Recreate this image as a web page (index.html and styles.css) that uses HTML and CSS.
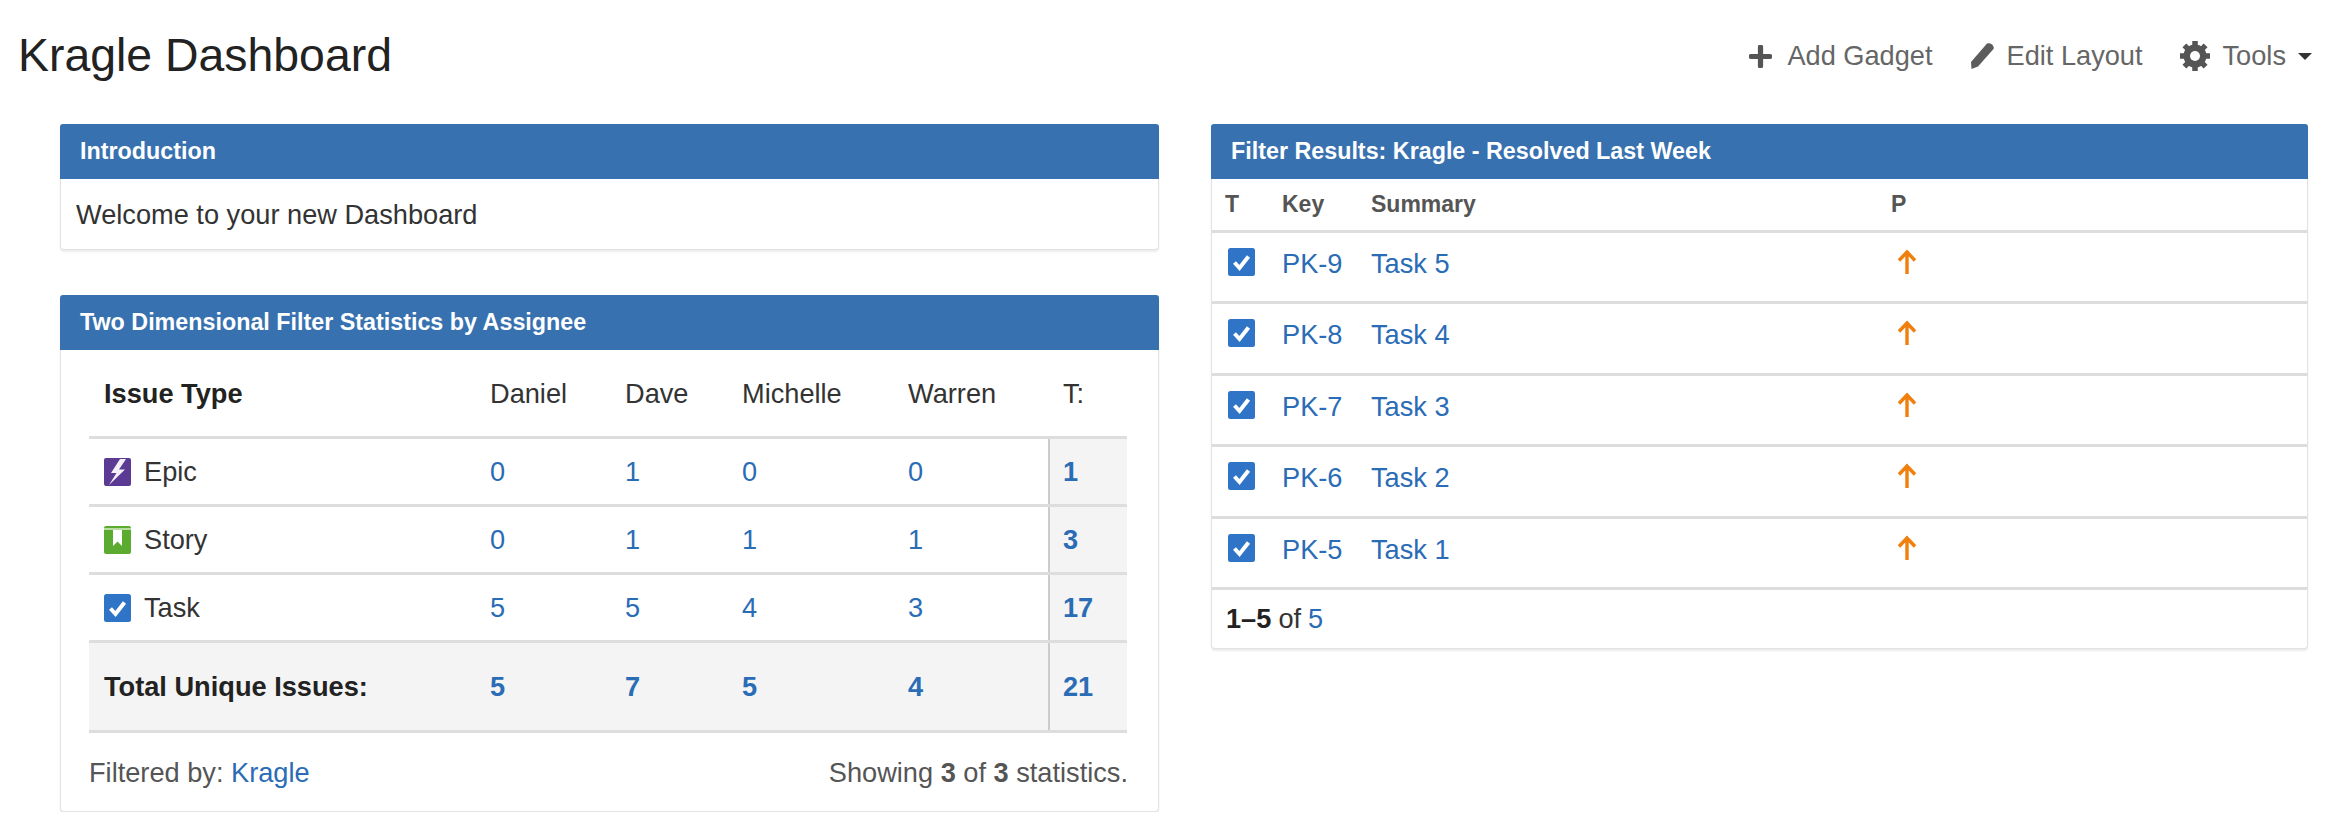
FILE: index.html
```html
<!DOCTYPE html>
<html lang="en">
<head>
<meta charset="utf-8">
<title>Kragle Dashboard</title>
<link rel="stylesheet" href="styles.css">
</head>
<body>
<svg class="defs" width="0" height="0" aria-hidden="true">
  <symbol id="task" viewBox="0 0 27 28">
    <rect x="0" y="0" width="27" height="28" rx="2.5" fill="#2f74c6"/>
    <path d="M6.5 14.5 L11.5 20 L20.5 8.5" fill="none" stroke="#fff" stroke-width="4"/>
  </symbol>
  <symbol id="arrow" viewBox="0 0 20 26">
    <path d="M10 25 V3 M2 11.5 L10 3 L18 11.5" fill="none" stroke="#f07f0c" stroke-width="3.4"/>
  </symbol>
</svg>
<header class="top">
  <h1 class="title">Kragle Dashboard</h1>
  <nav class="tools">
    <a class="tool tool-add">
      <svg class="ic-plus" viewBox="0 0 22 22"><path d="M11 2 V20 M2 11 H20" stroke="#555" stroke-width="5" stroke-linecap="round"/></svg>
      <span>Add Gadget</span>
    </a>
    <a class="tool">
      <svg class="ic-pencil" viewBox="0 0 26 28"><path d="M18 1.5 Q20.5 .5 23 2.500 Q25.500 5 24.500 7 L9 24.500 L2.500 27 L2 20 Z" fill="#5c5c5c"/></svg>
      <span>Edit Layout</span>
    </a>
    <a class="tool">
      <svg class="ic-gear" viewBox="0 0 32 32"><circle cx="16" cy="16" r="8.500" fill="none" stroke="#555" stroke-width="6"/><path d="M16 1 V31 M1 16 H31 M5.400 5.400 L26.600 26.600 M26.600 5.400 L5.400 26.600" stroke="#555" stroke-width="5.500"/><circle cx="16" cy="16" r="5" fill="#fff"/></svg>
      <span>Tools</span>
      <i class="caret"></i>
    </a>
  </nav>
</header>
<main class="columns">
  <div class="col">
    <section class="gadget intro">
      <h2 class="gadget-title">Introduction</h2>
      <p class="welcome">Welcome to your new Dashboard</p>
    </section>
    <section class="gadget stats">
      <h2 class="gadget-title">Two Dimensional Filter Statistics by Assignee</h2>
      <div class="stats-body">
        <table class="stats-table">
          <colgroup><col class="c-type"><col class="c-daniel"><col class="c-dave"><col class="c-michelle"><col class="c-warren"><col class="c-total"></colgroup>
          <thead>
            <tr><th class="name">Issue Type</th><th>Daniel</th><th>Dave</th><th>Michelle</th><th>Warren</th><th class="head-total">T:</th></tr>
          </thead>
          <tbody>
            <tr>
              <td class="name"><span class="type">
                <svg class="issue" viewBox="0 0 27 28"><rect width="27" height="28" rx="2" fill="#5b3a94"/><path d="M16 1 L7 15 H12.500 L5 27 L21 11.500 H15 L22 1 Z" fill="#fff" opacity=".92"/></svg>Epic</span></td>
              <td><a>0</a></td><td><a>1</a></td><td><a>0</a></td><td><a>0</a></td><td class="sum"><a>1</a></td>
            </tr>
            <tr>
              <td class="name"><span class="type">
                <svg class="issue" viewBox="0 0 27 28"><rect width="27" height="28" rx="2" fill="#5aab2f"/><path d="M9 3 H18 V20 L13.500 15.500 L9 20 Z" fill="#fff"/><rect y="2" width="27" height="2" fill="#b9dca3"/></svg>Story</span></td>
              <td><a>0</a></td><td><a>1</a></td><td><a>1</a></td><td><a>1</a></td><td class="sum"><a>3</a></td>
            </tr>
            <tr>
              <td class="name"><span class="type"><svg class="issue"><use href="#task"/></svg>Task</span></td>
              <td><a>5</a></td><td><a>5</a></td><td><a>4</a></td><td><a>3</a></td><td class="sum"><a>17</a></td>
            </tr>
          </tbody>
          <tfoot>
            <tr><th class="name">Total Unique Issues:</th><td><a>5</a></td><td><a>7</a></td><td><a>5</a></td><td><a>4</a></td><td class="sum"><a>21</a></td></tr>
          </tfoot>
        </table>
        <div class="stats-foot">
          <span>Filtered by: <a>Kragle</a></span>
          <span>Showing <b>3</b> of <b>3</b> statistics.</span>
        </div>
      </div>
    </section>
  </div>
  <div class="col">
    <section class="gadget results">
      <h2 class="gadget-title">Filter Results: Kragle - Resolved Last Week</h2>
      <table class="results-table">
        <colgroup><col class="r-t"><col class="r-key"><col class="r-sum"><col class="r-p"></colgroup>
        <thead><tr><th>T</th><th>Key</th><th>Summary</th><th>P</th></tr></thead>
        <tbody>
          <tr><td><svg class="issue"><use href="#task"/></svg></td><td><a>PK-9</a></td><td><a>Task 5</a></td><td><svg class="arrow"><use href="#arrow"/></svg></td></tr>
          <tr><td><svg class="issue"><use href="#task"/></svg></td><td><a>PK-8</a></td><td><a>Task 4</a></td><td><svg class="arrow"><use href="#arrow"/></svg></td></tr>
          <tr><td><svg class="issue"><use href="#task"/></svg></td><td><a>PK-7</a></td><td><a>Task 3</a></td><td><svg class="arrow"><use href="#arrow"/></svg></td></tr>
          <tr><td><svg class="issue"><use href="#task"/></svg></td><td><a>PK-6</a></td><td><a>Task 2</a></td><td><svg class="arrow"><use href="#arrow"/></svg></td></tr>
          <tr><td><svg class="issue"><use href="#task"/></svg></td><td><a>PK-5</a></td><td><a>Task 1</a></td><td><svg class="arrow"><use href="#arrow"/></svg></td></tr>
        </tbody>
      </table>
      <div class="results-foot"><b>1–5</b> of <a>5</a></div>
    </section>
  </div>
</main>
</body>
</html>
```
FILE: styles.css
```css
* { box-sizing: border-box; }
html, body { margin: 0; padding: 0; background: #fff; }
body { font-family: "Liberation Sans", Arial, sans-serif; font-size: 27.2px; color: #333; }
a { color: #2a6cb5; text-decoration: none; }
.defs { display: block; height: 0; }

.top { height: 124px; padding: 0 24px 14px 18px; display: flex; align-items: center; justify-content: space-between; }
.title { margin: 0; font-size: 46.4px; font-weight: 400; color: #222; }
.tools { display: flex; align-items: center; gap: 36px; margin-top: 2px; }
.tool { display: flex; align-items: center; gap: 12px; color: #666; font-size: 27.2px; }
.tool-add { gap: 15px; }
.ic-plus { width: 23px; height: 23px; }
.ic-pencil { width: 26px; height: 28px; }
.ic-gear { width: 32px; height: 32px; }
.caret { width: 0; height: 0; margin-left: 0; border: 7px solid transparent; border-top-color: #333; border-bottom: 0; }

.columns { display: grid; grid-template-columns: 1099px 1097px; column-gap: 52px; padding-left: 60px; align-items: start; }
.col { display: flex; flex-direction: column; gap: 45px; }
.gadget { border: 1px solid #e2e2e2; border-top: 0; border-radius: 4px; box-shadow: 0 2px 2px rgba(0,0,0,.08); background: #fff; }
.gadget-title { margin: 0 -1px; height: 55px; padding: 0 20px; display: flex; align-items: center; background: #3771b0; border-radius: 3px 3px 0 0; color: #fff; font-size: 23.3px; font-weight: 700; }

.welcome { margin: 0; height: 70px; padding: 2px 15px 0; display: flex; align-items: center; color: #333; }

.stats-body { padding: 0 30px 0 28px; }
.stats-table { width: 1038px; border-collapse: collapse; table-layout: fixed; }
.c-type { width: 386px; }
.c-daniel { width: 135px; }
.c-dave { width: 117px; }
.c-michelle { width: 166px; }
.c-warren { width: 156px; }
.c-total { width: 78px; }
.stats-table th, .stats-table td { padding: 2px 15px 0; text-align: left; font-weight: 400; border-bottom: 3px solid #ddd; }
.stats-table thead th { height: 87px; }
.stats-table .head-total { padding-left: 14px; }
.stats-table tbody td { height: 68px; }
.stats-table .name { font-weight: 400; }
.stats-table thead .name, .stats-table tfoot .name { font-weight: 700; color: #222; }
.stats-table tfoot th, .stats-table tfoot td { height: 90px; background: #f4f4f4; font-weight: 700; }
.stats-table .sum { background: #f4f4f4; border-left: 2px solid #ccc; font-weight: 700; padding-left: 13px; }
.type { display: flex; align-items: center; gap: 13px; }
.issue { width: 27px; height: 28px; display: block; flex: none; }

.stats-foot { height: 78px; padding-top: 2px; display: flex; align-items: center; justify-content: space-between; color: #555; }

.results-table { width: 100%; border-collapse: collapse; table-layout: fixed; }
.r-t { width: 56px; }
.r-key { width: 89px; }
.r-sum { width: 520px; }
.results-table th, .results-table td { padding: 0 0 0 14px; text-align: left; border-bottom: 3px solid #ddd; }
.results-table th { height: 52px; font-size: 23px; font-weight: 700; color: #555; }
.results-table th:first-child { padding-left: 13px; }
.results-table td { height: 71.5px; padding-top: 15px; vertical-align: top; }
.results-table td:first-child { padding-left: 16px; }
.arrow { width: 20px; height: 26px; display: block; margin: 1px 0 0 6px; }

.results-foot { height: 58px; padding: 0 14px; display: flex; align-items: center; gap: 7px; color: #333; }
.results-foot b { color: #222; }
```
